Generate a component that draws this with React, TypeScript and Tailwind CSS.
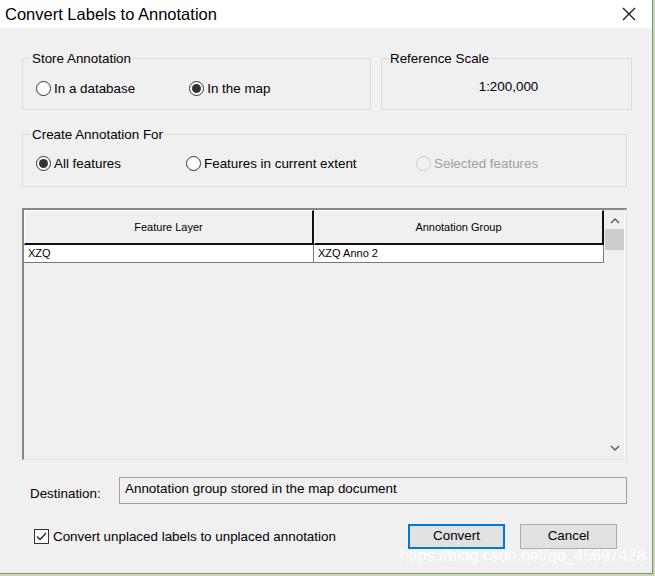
import React from "react";

const F = { fontFamily: '"Liberation Sans", Arial, sans-serif' } as const;

function Radio({ checked, disabled, label }: { checked?: boolean; disabled?: boolean; label: string }) {
  return (
    <div className="flex items-center gap-[3px]">
      <span
        className={
          "w-[15px] h-[15px] rounded-full border flex items-center justify-center " +
          (disabled ? "border-[#cccccc] bg-[#f0f0f0]" : "border-[#333333] bg-white")
        }
      >
        {checked ? <span className="w-[9px] h-[9px] rounded-full bg-[#333333]" /> : null}
      </span>
      <span className={"text-[13.4px] leading-[15px] " + (disabled ? "text-[#a0a0a0]" : "text-black")}>{label}</span>
    </div>
  );
}

function Chevron({ up }: { up?: boolean }) {
  return (
    <svg width="10" height="7" viewBox="0 0 10 7">
      <path d={up ? "M1 6 L5 2 L9 6" : "M1 1 L5 5 L9 1"} fill="none" stroke="#606060" strokeWidth="1.5" />
    </svg>
  );
}

export default function App() {
  return (
    <div className="w-[655px] h-[576px] overflow-hidden bg-[#c3d8ad] relative" style={F}>
      <div className="w-[653px] h-[574px] bg-[#f0f0f0] border-r border-b border-[#8a8a8a] flex flex-col">
        {/* title bar */}
        <div className="h-[28px] bg-white flex items-center justify-between pl-[5px] pr-[16px]">
          <span className="text-[16.5px] text-black">Convert Labels to Annotation</span>
          <svg width="14" height="14" viewBox="0 0 14 14">
            <path d="M1 1 L13 13 M13 1 L1 13" stroke="#111" strokeWidth="1.2" />
          </svg>
        </div>

        <div className="flex-1 flex flex-col pl-[22px] pr-[25px]">
          {/* top groups */}
          <div className="flex gap-[10px] mt-[23px]">
            <fieldset className="shrink-0 w-[349px] h-[59px] border border-[#dcdcdc] px-[8px] pt-[15px]">
              <legend className="text-[13.4px] leading-[15px] px-[1px] text-black">Store Annotation</legend>
              <div className="flex pl-[5px] gap-[54px]">
                <Radio label="In a database" />
                <Radio checked label="In the map" />
              </div>
            </fieldset>
            <fieldset className="shrink-0 w-[251px] h-[59px] border border-[#dcdcdc] px-[7px] pt-[13px]">
              <legend className="text-[13.4px] leading-[15px] px-[1px] text-black">Reference Scale</legend>
              <div className="text-center text-[13.4px] leading-[15px] text-black pl-[4px]">1:200,000</div>
            </fieldset>
          </div>

          {/* create annotation for */}
          <fieldset className="w-[605px] h-[60px] border border-[#dcdcdc] px-[8px] pt-[14px] mt-[17px]">
            <legend className="text-[13.4px] leading-[15px] px-[1px] text-black">Create Annotation For</legend>
            <div className="flex pl-[5px]">
              <div className="w-[150px]">
                <Radio checked label="All features" />
              </div>
              <div className="w-[230px]">
                <Radio label="Features in current extent" />
              </div>
              <Radio disabled label="Selected features" />
            </div>
          </fieldset>

          {/* table */}
          <div className="w-[605px] h-[252px] mt-[21px] border-t-2 border-l-2 border-[#888888] border-r border-b border-r-[#e3e3e3] border-b-[#e3e3e3] flex">
            <div className="w-[580px] flex flex-col">
              <div className="flex h-[35px]">
                <div className="w-[290px] border-l border-t border-white border-r-2 border-b-2 border-r-[#111] border-b-[#111] flex items-center justify-center text-[11px] text-black">
                  Feature Layer
                </div>
                <div className="w-[290px] border-l border-t border-white border-r-2 border-b-2 border-r-[#111] border-b-[#111] flex items-center justify-center text-[11px] text-black">
                  Annotation Group
                </div>
              </div>
              <div className="flex h-[18px] bg-white border-b border-[#7a7a7a]">
                <div className="w-[290px] border-r border-[#7a7a7a] pl-[4px] text-[11px] leading-[17px] text-black">XZQ</div>
                <div className="w-[290px] border-r border-[#7a7a7a] pl-[4px] text-[11px] leading-[17px] text-black">XZQ Anno 2</div>
              </div>
            </div>
            <div className="w-[20px] ml-[1px] flex flex-col items-center border-r border-[#fbfbfb]">
              <div className="h-[18px] flex items-center justify-center mt-[1px]">
                <Chevron up />
              </div>
              <div className="w-[19px] h-[21px] bg-[#cdcdcd]" />
              <div className="flex-1" />
              <div className="h-[18px] flex items-center justify-center mb-[2px]">
                <Chevron />
              </div>
            </div>
          </div>

          {/* destination */}
          <div className="flex items-start mt-[17px]">
            <span className="text-[13.4px] leading-[15px] text-black ml-[8px] mt-[9px] w-[89px]">Destination:</span>
            <div className="w-[508px] h-[27px] border border-[#a0a0a0] bg-[#f0f0f0] pl-[5px] pt-[3px] text-[13.4px] leading-[15px] text-black">
              Annotation group stored in the map document
            </div>
          </div>

          {/* bottom */}
          <div className="flex items-center mt-[20px]">
            <div className="flex items-center gap-[4px] ml-[12px]">
              <span className="w-[15px] h-[15px] border border-[#333] bg-white flex items-center justify-center">
                <svg width="11" height="9" viewBox="0 0 11 9">
                  <path d="M1 4.5 L4 7.5 L10 1" fill="none" stroke="#222" strokeWidth="1.3" />
                </svg>
              </span>
              <span className="text-[13.4px] leading-[15px] text-black">Convert unplaced labels to unplaced annotation</span>
            </div>
            <div className="ml-auto w-[97px] h-[25px] border-2 border-[#0078d7] bg-[#e1e1e1] flex items-center justify-center text-[13.4px] text-black">
              Convert
            </div>
            <div className="ml-[15px] mr-[10px] w-[97px] h-[25px] border border-[#adadad] bg-[#e1e1e1] flex items-center justify-center text-[13.4px] text-black">
              Cancel
            </div>
          </div>
        </div>
      </div>
      <div className="absolute left-[400px] top-[546px] text-[16px] leading-[19px] text-white/85" style={F}>
        https://blog.csdn.net/qq_45697428
      </div>
    </div>
  );
}
